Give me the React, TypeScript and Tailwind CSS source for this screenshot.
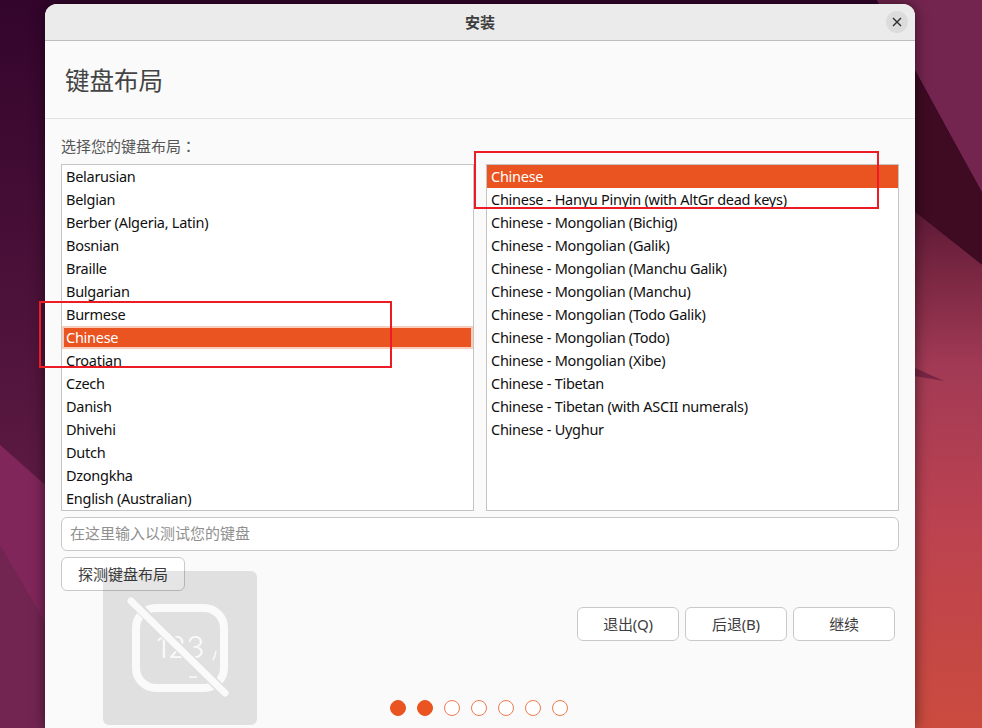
const layouts = [
  'Belarusian',
  'Belgian',
  'Berber (Algeria, Latin)',
  'Bosnian',
  'Braille',
  'Bulgarian',
  'Burmese',
  'Chinese',
  'Croatian',
  'Czech',
  'Danish',
  'Dhivehi',
  'Dutch',
  'Dzongkha',
  'English (Australian)',
]

const variants = [
  'Chinese',
  'Chinese - Hanyu Pinyin (with AltGr dead keys)',
  'Chinese - Mongolian (Bichig)',
  'Chinese - Mongolian (Galik)',
  'Chinese - Mongolian (Manchu Galik)',
  'Chinese - Mongolian (Manchu)',
  'Chinese - Mongolian (Todo Galik)',
  'Chinese - Mongolian (Todo)',
  'Chinese - Mongolian (Xibe)',
  'Chinese - Tibetan',
  'Chinese - Tibetan (with ASCII numerals)',
  'Chinese - Uyghur',
]

function Wallpaper() {
  return (
    <svg className="absolute inset-0 h-full w-full" viewBox="0 0 982 728">
      <defs>
        <linearGradient id="topDark" x1="0" y1="0" x2="0" y2="1">
          <stop offset="0" stopColor="#33042c" />
          <stop offset="1" stopColor="#5c1a42" />
        </linearGradient>
        <linearGradient id="redFade" x1="0" y1="0" x2="0" y2="1">
          <stop offset="0" stopColor="#5f1a36" />
          <stop offset="0.3" stopColor="#a23a55" />
          <stop offset="0.6" stopColor="#bb4250" />
          <stop offset="1" stopColor="#cb4b3e" />
        </linearGradient>
      </defs>
      <rect width="982" height="728" fill="#7a2a55" />
      <polygon points="0,0 877,0 982,192 982,265 915,212 45,485 0,445" fill="url(#topDark)" />
      <polygon points="877,0 982,0 982,192" fill="#74254f" />
      <polygon points="915,72 982,192 982,265 915,212" fill="#3f0b22" />
      <polygon points="915,212 982,265 982,728 915,728" fill="url(#redFade)" />
      <polygon points="915,368 944,381 915,376" fill="#7a2545" />
      <polygon points="0,445 45,485 45,622 0,545" fill="#80265a" />
      <polygon points="0,545 45,622 45,728 0,728" fill="#732552" />
    </svg>
  )
}

function ListRow({ label, selected, halo }: { label: string; selected: boolean; halo?: boolean }) {
  if (selected && halo) {
    return (
      <div className="flex h-[23px] items-center border-2 border-[#f9cdbb] bg-[#e95420] pl-[2px] tracking-[-0.27px] text-white">
        {label}
      </div>
    )
  }
  return (
    <div
      className={`flex h-[23px] items-center pl-[4px] tracking-[-0.27px] ${selected ? 'bg-[#e95420] text-white' : 'text-[#101010]'}`}
    >
      {label}
    </div>
  )
}

function NavButton({ label }: { label: string }) {
  return (
    <button className="h-[34px] w-[102px] rounded-[6px] border border-[#c9c9c9] bg-white tracking-[-0.2px] text-[#3d3d3d]">
      {label}
    </button>
  )
}

function NoKeyboardTile() {
  return (
    <div className="absolute left-[58px] top-[567px] flex h-[154px] w-[154px] items-center justify-center rounded-[6px] bg-black/10">
      <svg width="154" height="154" viewBox="0 0 154 154" fill="none">
        <rect x="33" y="37" width="88" height="80" rx="20" stroke="#fafafa" strokeWidth="8" />
        <text x="53" y="87" fontSize="30" fontFamily="Inter, sans-serif" fontWeight="300" fill="#fafafa">
          123
        </text>
        <path d="M113 80q-1 6-3 9" stroke="#fafafa" strokeWidth="1.5" />
        <path d="M86 106h8" stroke="#fafafa" strokeWidth="1.5" />
        <path d="M24 25 L127 127" stroke="#dfdfdf" strokeWidth="10" />
        <path d="M28 30 L122 122" stroke="#fafafa" strokeWidth="7" strokeLinecap="round" />
      </svg>
    </div>
  )
}

function App() {
  return (
    <div className="relative h-[728px] w-[982px] overflow-hidden font-['Noto_Sans','Noto_Sans_CJK_SC',sans-serif] text-[14.5px]">
      <Wallpaper />

      <div className="relative ml-[45px] mt-[4px] h-[724px] w-[870px] rounded-t-[12px] bg-[#fafafa] shadow-[0_0_14px_rgba(0,0,0,0.55)]">
        <header className="relative flex h-[37px] items-center justify-center rounded-t-[12px] border-b border-[#bdbdbd] bg-[#ebebeb]">
          <span className="text-[15px] font-bold text-[#3d3d3d]">安装</span>
          <button className="absolute right-[7px] top-[7px] flex h-[22px] w-[22px] items-center justify-center rounded-full bg-[#dcdcdc]">
            <svg width="10" height="10" viewBox="0 0 10 10" stroke="#2e2e2e" strokeWidth="1.4">
              <path d="M1 1l8 8M9 1l-8 8" />
            </svg>
          </button>
        </header>

        <div className="flex h-[78px] items-center border-b border-[#e2e2e2] pl-[20px] pt-[4px]">
          <h1 className="text-[24.5px] font-normal text-[#444444]">键盘布局</h1>
        </div>

        <div className="px-[16px]">
          <p className="flex h-[45px] items-end pb-[7px] text-[15px] text-[#555555]">
            选择您的键盘布局<span className="font-['Noto_Sans_CJK_TC',sans-serif]">：</span>
          </p>

          <div className="flex justify-between">
            <div className="h-[347px] w-[413px] overflow-hidden border border-[#c4c4c4] bg-white">
              {layouts.map((name) => (
                <ListRow key={name} label={name} selected={name === 'Chinese'} halo />
              ))}
            </div>
            <div className="h-[347px] w-[413px] overflow-hidden border border-[#c4c4c4] bg-white">
              {variants.map((name) => (
                <ListRow key={name} label={name} selected={name === 'Chinese'} />
              ))}
            </div>
          </div>

          <div className="mt-[6px] flex h-[34px] items-center rounded-[6px] border border-[#c9c9c9] bg-white pb-[2px] pl-[8px] text-[15px] text-[#8f8f8f]">
            在这里输入以测试您的键盘
          </div>

          <button className="mt-[6px] block h-[34px] w-[124px] rounded-[6px] border border-[#c9c9c9] bg-white text-[15px] text-[#3d3d3d]">
            探测键盘布局
          </button>

          <div className="mt-[16px] flex justify-end gap-[6px] pr-[4px] text-[15px]">
            <NavButton label="退出(Q)" />
            <NavButton label="后退(B)" />
            <NavButton label="继续" />
          </div>

          <div className="mt-[59px] flex justify-center gap-[11px] pr-[2px]">
            {[0, 1, 2, 3, 4, 5, 6].map((step) => (
              <span
                key={step}
                className={`h-[16px] w-[16px] rounded-full border-[1.5px] ${step < 2 ? 'border-[#e95420] bg-[#e95420]' : 'border-[#ee7a52] bg-white'}`}
              />
            ))}
          </div>
        </div>

        <NoKeyboardTile />
      </div>

      <div className="absolute left-[474px] top-[151px] h-[58px] w-[405px] border-2 border-[#ed1c24]" />
      <div className="absolute left-[39px] top-[301px] h-[67px] w-[353px] border-2 border-[#ed1c24]" />
    </div>
  )
}

export default App
